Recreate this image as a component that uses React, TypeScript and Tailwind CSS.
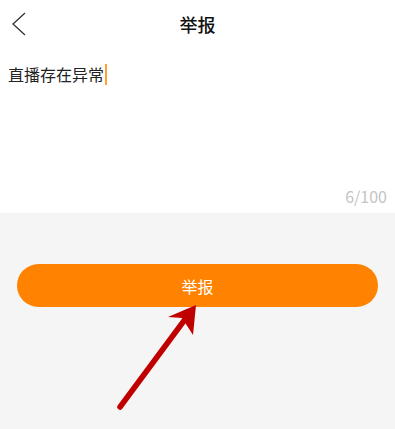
const font = { fontFamily: '"Noto Sans CJK SC", "Noto Sans", sans-serif' }

export default function App() {
  return (
    <div className="relative flex h-[429px] w-[395px] flex-col overflow-hidden bg-[#f5f5f5]" style={font}>
      {/* header */}
      <div className="relative flex h-[48px] items-center justify-center bg-white">
        <button className="absolute left-[10px] top-[10px] text-[#333]">
          <svg width="18" height="28" viewBox="0 0 18 28" fill="none">
            <polyline points="15,3 3,14 15,25" stroke="#333" strokeWidth="1.3" />
          </svg>
        </button>
        <span className="text-[18px] font-medium text-[#111]">举报</span>
      </div>

      {/* input area */}
      <div className="flex h-[165px] flex-col bg-white px-[8px]">
        <div className="mt-[14px] flex items-center text-[16px] leading-[24px] text-[#222]">
          直播存在异常
          <span className="ml-[1px] inline-block h-[21px] w-[2px] bg-[#ffa030]" />
        </div>
        <div className="mt-auto mb-[6px] text-right text-[16px] leading-[22px] text-[#c4c4c4]">6/100</div>
      </div>

      {/* button */}
      <div className="px-[17px] pt-[51px]">
        <button className="h-[43px] w-full rounded-full bg-[#ff8200] text-[16px] text-white">举报</button>
      </div>

      {/* annotation arrow */}
      <svg className="pointer-events-none absolute left-0 top-0" width="395" height="429" viewBox="0 0 395 429">
        <line x1="120" y1="407" x2="186" y2="318" stroke="#c00000" strokeWidth="5.5" strokeLinecap="round" />
        <polygon points="196,305 168,317 182,318 193,335" fill="#c00000" />
      </svg>
    </div>
  )
}
